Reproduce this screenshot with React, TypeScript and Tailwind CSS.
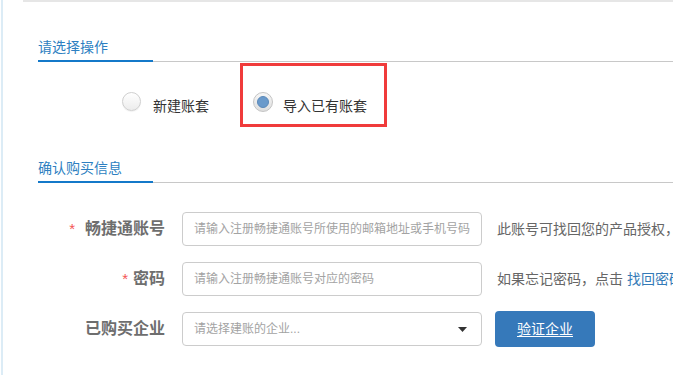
import React from "react";

const font = "font-['Liberation_Sans','Noto_Sans_CJK_SC',sans-serif]";

function Heading({ text, className }: { text: string; className?: string }) {
  return (
    <div className={`flex border-b border-[#c8c8c8] ${className ?? ""}`}>
      <span className="w-[115px] pb-[3px] mb-[-1px] border-b-2 border-[#1479c9] text-[14px] leading-5 text-[#2d7fc1] whitespace-nowrap">
        {text}
      </span>
    </div>
  );
}

function RadioOff() {
  return (
    <span className="block w-[19px] h-[19px] shrink-0 rounded-full border border-[#cfcfcf] bg-gradient-to-b from-white to-[#ececec] shadow-[0_1px_1px_rgba(0,0,0,0.06)]" />
  );
}

function RadioOn() {
  return (
    <span className="flex w-[20px] h-[20px] shrink-0 items-center justify-center rounded-full border border-[#c4c4c4] bg-gradient-to-b from-[#f7f7f7] to-[#dedede]">
      <span className="block w-[12px] h-[12px] rounded-full bg-[#6a9acb] border border-[#5b89b9]" />
    </span>
  );
}

export default function App() {
  return (
    <div className={`w-[673px] h-[375px] overflow-hidden bg-white ${font}`}>
      <div className="ml-[1px] h-full border-l-2 border-[#dcecf6] flex flex-col">
        <div className="ml-[20px] h-[2px] bg-[#e6e6e6] shrink-0" />
        <div className="pl-[35px] flex flex-col">
          <Heading text="请选择操作" className="mt-[35px]" />

          <div className="flex items-start mt-[1px] h-[64px]">
            <div className="flex items-start pt-[29px] ml-[84px]">
              <RadioOff />
              <span className="ml-[12px] mt-[4px] text-[14px] leading-5 text-[#333] whitespace-nowrap">新建账套</span>
            </div>
            <div className="ml-[31px] w-[147px] h-[64px] border-[3px] border-[#f03b3b] flex items-start pt-[26px] pl-[10px]">
              <RadioOn />
              <span className="ml-[10px] mt-[4px] text-[14px] leading-5 text-[#333] whitespace-nowrap">导入已有账套</span>
            </div>
          </div>

          <Heading text="确认购买信息" className="mt-[31px]" />

          <div className="flex flex-col gap-4 mt-[29px]">
            <div className="flex items-center h-[34px]">
              <div className="w-[127px] shrink-0 text-right text-[16px] font-bold text-[#6e6e6e] whitespace-nowrap">
                <span className="text-[#f45454] mr-[10px] font-normal text-[15px]">*</span>畅捷通账号
              </div>
              <div className="ml-[17px] w-[300px] h-[34px] shrink-0 border border-[#cccccc] rounded-[4px] flex items-center px-[11px]">
                <span className="text-[12px] text-[#a3a3a3] whitespace-nowrap">请输入注册畅捷通账号所使用的邮箱地址或手机号码</span>
              </div>
              <span className="ml-[15px] text-[14px] text-[#666] whitespace-nowrap">此账号可找回您的产品授权，请牢记</span>
            </div>

            <div className="flex items-center h-[34px]">
              <div className="w-[127px] shrink-0 text-right text-[16px] font-bold text-[#6e6e6e] whitespace-nowrap">
                <span className="text-[#f45454] mr-[5px] font-normal text-[15px]">*</span>密码
              </div>
              <div className="ml-[17px] w-[300px] h-[34px] shrink-0 border border-[#cccccc] rounded-[4px] flex items-center px-[11px]">
                <span className="text-[12px] text-[#a3a3a3] whitespace-nowrap">请输入注册畅捷通账号对应的密码</span>
              </div>
              <span className="ml-[15px] text-[14px] text-[#666] whitespace-nowrap">
                如果忘记密码，点击 <span className="text-[#337ab7]">找回密码</span>
              </span>
            </div>

            <div className="flex items-center h-[34px]">
              <div className="w-[127px] shrink-0 text-right text-[16px] font-bold text-[#6e6e6e] whitespace-nowrap">
                已购买企业
              </div>
              <div className="ml-[17px] w-[300px] h-[34px] shrink-0 border border-[#cccccc] rounded-[4px] flex items-center pl-[11px] pr-[14px]">
                <span className="flex-1 text-[12px] text-[#a3a3a3] whitespace-nowrap">请选择建账的企业...</span>
                <svg width="9" height="5" viewBox="0 0 9 5" className="shrink-0">
                  <path d="M0 0 L9 0 L4.5 5 Z" fill="#333" />
                </svg>
              </div>
              <button className="ml-[13px] w-[100px] h-[36px] shrink-0 rounded-[4px] bg-[#3679ba] text-white text-[14px] underline underline-offset-2">
                验证企业
              </button>
            </div>
          </div>
        </div>
      </div>
    </div>
  );
}
